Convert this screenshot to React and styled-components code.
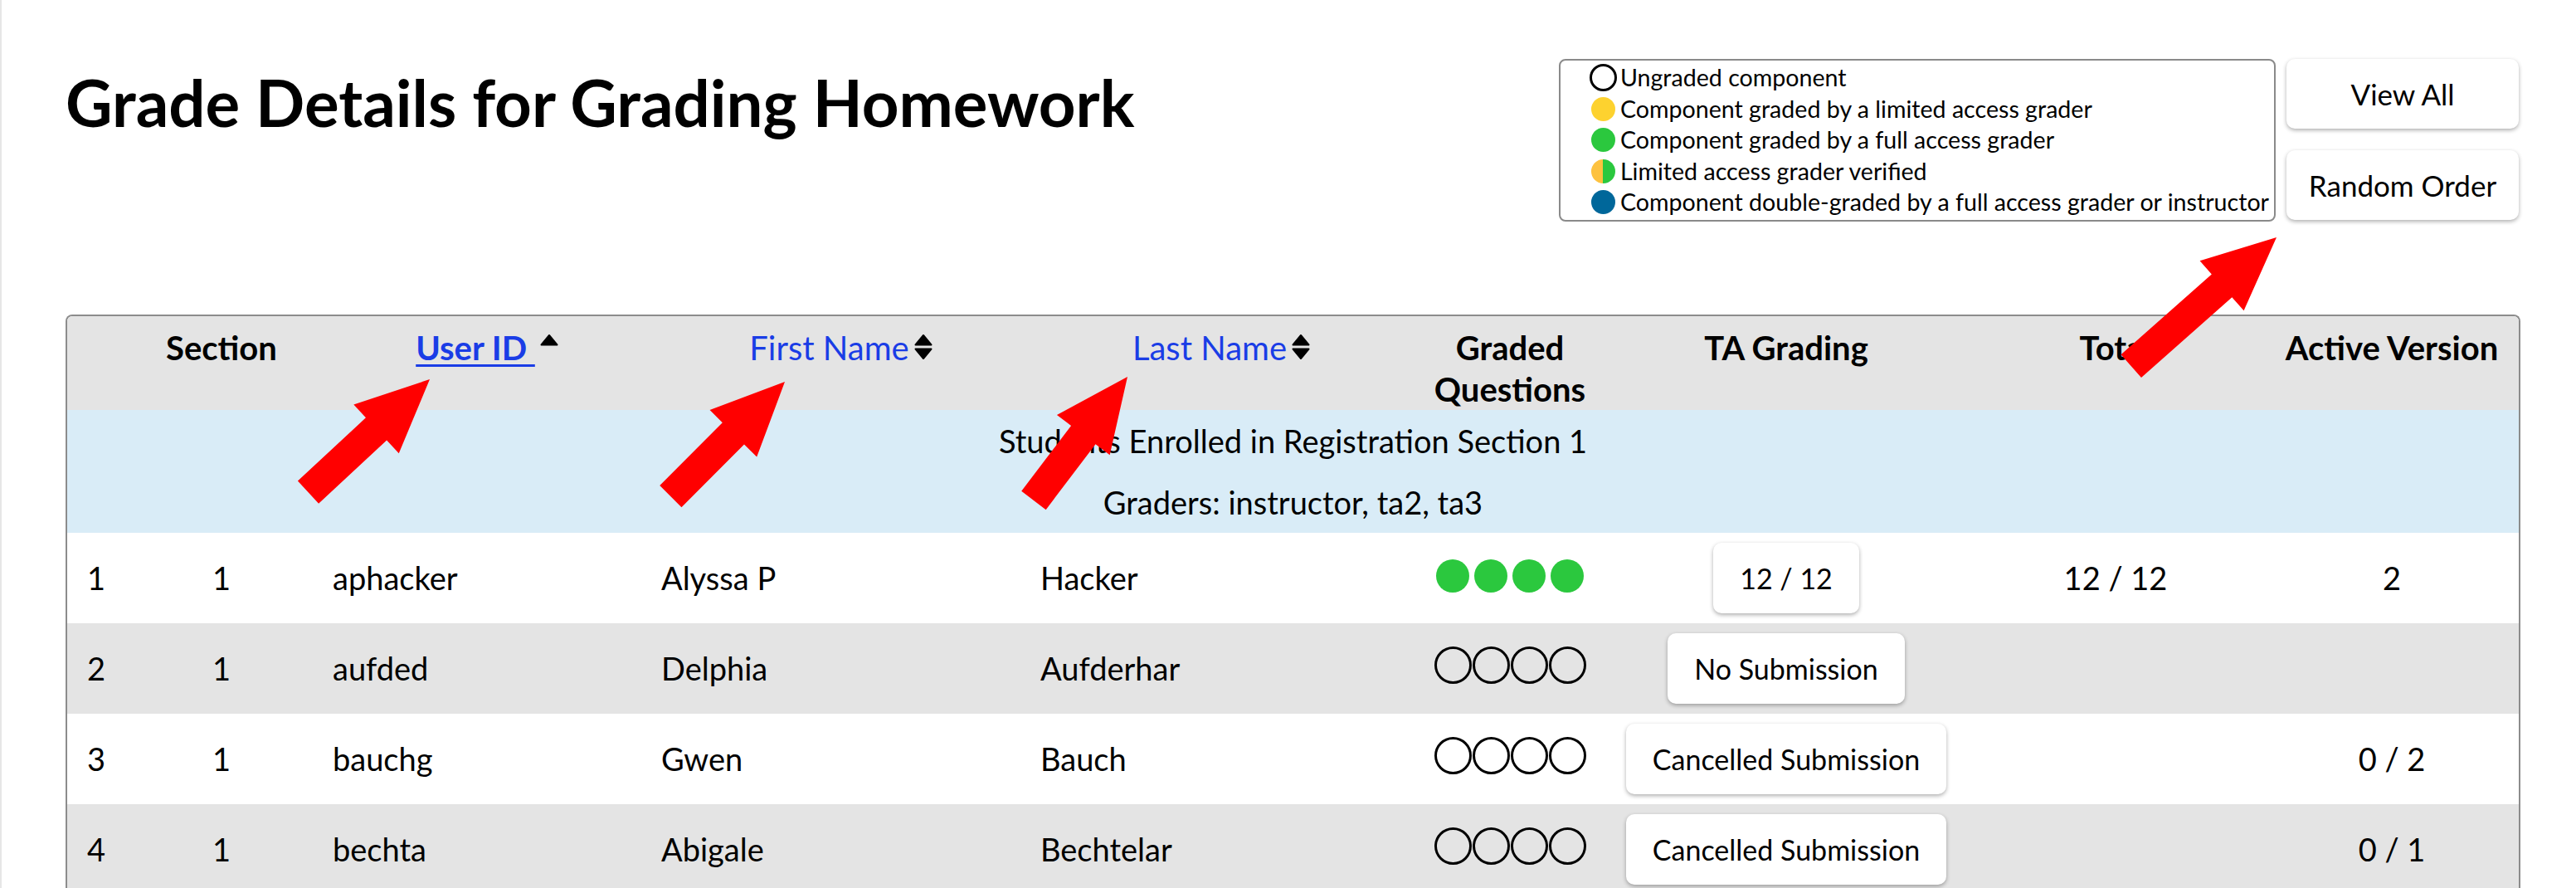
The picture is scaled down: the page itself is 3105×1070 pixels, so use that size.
import styled, { createGlobalStyle } from 'styled-components';

const GlobalStyle = createGlobalStyle`
  html, body {
    margin: 0;
    padding: 0;
    background: #fff;
  }
  body {
    font-family: 'Lato', 'Liberation Sans', sans-serif;
    color: #000;
  }
`;

const legend = [
  { kind: 'empty', label: 'Ungraded component' },
  { kind: 'limited', label: 'Component graded by a limited access grader' },
  { kind: 'full', label: 'Component graded by a full access grader' },
  { kind: 'verified', label: 'Limited access grader verified' },
  { kind: 'double', label: 'Component double-graded by a full access grader or instructor' },
];

const students = [
  { n: 1, section: 1, id: 'aphacker', first: 'Alyssa P', last: 'Hacker', graded: true, grading: '12 / 12', total: '12 / 12', version: '2' },
  { n: 2, section: 1, id: 'aufded', first: 'Delphia', last: 'Aufderhar', graded: false, grading: 'No Submission', total: '', version: '' },
  { n: 3, section: 1, id: 'bauchg', first: 'Gwen', last: 'Bauch', graded: false, grading: 'Cancelled Submission', total: '', version: '0 / 2' },
  { n: 4, section: 1, id: 'bechta', first: 'Abigale', last: 'Bechtelar', graded: false, grading: 'Cancelled Submission', total: '', version: '0 / 1' },
];

// red call-out arrows drawn over the screenshot
const arrows = [
  { x: 516, y: 457, angle: -42.9, length: 200 },
  { x: 944, y: 460, angle: -45.1, length: 195 },
  { x: 1357, y: 454, angle: -52.8, length: 187 },
  { x: 2742, y: 286, angle: -41.5, length: 234 },
];

function SortIcon({ both }) {
  return (
    <SortSvg viewBox='0 0 22 32' width='22' height='32'>
      <path d='M1.5 13.5 L11 2 L20.5 13.5 Z' fill='#000' stroke='#000' strokeWidth='2' strokeLinejoin='round' />
      {both && (
        <path d='M1.5 18.5 L11 30 L20.5 18.5 Z' fill='#000' stroke='#000' strokeWidth='2' strokeLinejoin='round' />
      )}
    </SortSvg>
  );
}

export default function App() {
  return (
    <Page>
      <GlobalStyle />
      <TopBar>
        <Title>Grade Details for Grading Homework</Title>
        <Controls>
          <Legend>
            {legend.map((item) => (
              <LegendItem key={item.kind}>
                <Dot $kind={item.kind} />
                {item.label}
              </LegendItem>
            ))}
          </Legend>
          <ButtonStack>
            <ActionButton>View All</ActionButton>
            <ActionButton>Random Order</ActionButton>
          </ButtonStack>
        </Controls>
      </TopBar>

      <Table>
        <colgroup>
          <col style={{ width: 76 }} />
          <col style={{ width: 220 }} />
          <col style={{ width: 396 }} />
          <col style={{ width: 457 }} />
          <col style={{ width: 474 }} />
          <col style={{ width: 232 }} />
          <col style={{ width: 434 }} />
          <col style={{ width: 360 }} />
          <col style={{ width: 306 }} />
        </colgroup>
        <thead>
          <tr>
            <Th />
            <Th>Section</Th>
            <Th $sortable>
              <SortLink $active>User ID </SortLink>
              <SortIcon />
            </Th>
            <Th $sortable>
              <SortLink>First Name</SortLink>
              <SortIcon both />
            </Th>
            <Th $sortable $shift='14px'>
              <SortLink>Last Name</SortLink>
              <SortIcon both />
            </Th>
            <Th>
              Graded
              <br />
              Questions
            </Th>
            <Th>TA Grading</Th>
            <Th>Total</Th>
            <Th>Active Version</Th>
          </tr>
        </thead>
        <tbody>
          <tr>
            <SectionCell colSpan={9}>Students Enrolled in Registration Section 1</SectionCell>
          </tr>
          <tr>
            <SectionCell colSpan={9}>Graders: instructor, ta2, ta3</SectionCell>
          </tr>
          {students.map((s) => (
            <Row key={s.n} $shaded={s.n % 2 === 0}>
              <Td>{s.n}</Td>
              <Td $center>{s.section}</Td>
              <Td>{s.id}</Td>
              <Td>{s.first}</Td>
              <Td>{s.last}</Td>
              <Td $center>
                <Marks>
                  {[0, 1, 2, 3].map((i) => (
                    <Mark key={i} $filled={s.graded} />
                  ))}
                </Marks>
              </Td>
              <Td $center $tight>
                <GradeButton>{s.grading}</GradeButton>
              </Td>
              <Td $center>{s.total}</Td>
              <Td $center>{s.version}</Td>
            </Row>
          ))}
        </tbody>
      </Table>

      <Annotations width='3105' height='1070' viewBox='0 0 3105 1070'>
        {arrows.map((a, i) => (
          <polygon
            key={i}
            fill='#ff0000'
            transform={`translate(${a.x} ${a.y}) rotate(${a.angle})`}
            points={`0,0 -88,-40 -88,-18.5 -${a.length},-18.5 -${a.length},18.5 -88,18.5 -88,40`}
          />
        ))}
      </Annotations>
    </Page>
  );
}

const Page = styled.div`
  position: relative;
  min-height: 1070px;
  padding: 0 69px 0 77px;
  border-left: 2px solid #e6e6e6;
  box-sizing: border-box;
  overflow: hidden;
`;

const TopBar = styled.div`
  display: flex;
  justify-content: space-between;
  align-items: flex-start;
  padding-top: 71px;
`;

const Title = styled.h1`
  margin: 6px 0 0;
  font-size: 78px;
  font-weight: 700;
  line-height: 1.2;
  white-space: nowrap;
`;

const Controls = styled.div`
  display: flex;
  align-items: flex-start;
  gap: 13px;
`;

const Legend = styled.div`
  border: 2px solid #8a8a8a;
  border-radius: 8px;
  padding: 2px 6px 2px 35px;
  font-size: 28.6px;
  line-height: 37.5px;
  white-space: nowrap;
`;

const LegendItem = styled.div`
  display: flex;
  align-items: center;
`;

const dotFill = {
  limited: '#fdd22f',
  full: '#2bc83e',
  double: '#00679a',
  verified: 'linear-gradient(90deg, #fdc23f 50%, #2bc83e 50%)',
};

const Dot = styled.span`
  flex: none;
  box-sizing: border-box;
  border-radius: 50%;
  width: ${(p) => (p.$kind === 'empty' ? '33px' : '29px')};
  height: ${(p) => (p.$kind === 'empty' ? '33px' : '29px')};
  margin: ${(p) => (p.$kind === 'empty' ? '0 4px 0 0' : '0 6px 0 2px')};
  border: ${(p) => (p.$kind === 'empty' ? '3px solid #000' : 'none')};
  background: ${(p) => dotFill[p.$kind] || 'transparent'};
`;

const ButtonStack = styled.div`
  display: flex;
  flex-direction: column;
  gap: 26px;
`;

const ActionButton = styled.button`
  width: 280px;
  height: 84px;
  background: #fff;
  border: none;
  border-radius: 10px;
  box-shadow: 0 2px 5px rgba(0, 0, 0, 0.32);
  font-family: 'Lato', 'Liberation Sans', sans-serif;
  font-size: 35px;
  color: #000;
  cursor: pointer;
`;

const Table = styled.table`
  margin-top: 112px;
  width: 100%;
  table-layout: fixed;
  border-collapse: separate;
  border-spacing: 0;
  border: 2px solid #8c8c8c;
  border-bottom: none;
  border-radius: 8px 8px 0 0;
  overflow: hidden;
`;

const Th = styled.th`
  background: #e4e4e4;
  padding: ${(p) => (p.$sortable ? `13px ${p.$shift || '0'} 0 24px` : '13px 10px 0')};
  font-size: 40px;
  font-weight: 700;
  line-height: 50px;
  text-align: center;
  vertical-align: top;
  white-space: nowrap;
`;

const SortLink = styled.a`
  color: #1a3de6;
  font-weight: ${(p) => (p.$active ? 700 : 400)};
  text-decoration: ${(p) => (p.$active ? 'underline' : 'none')};
  text-decoration-thickness: 3px;
  text-underline-offset: 5px;
  white-space: pre;
  cursor: pointer;
`;

const SortSvg = styled.svg`
  margin-left: 6px;
  vertical-align: baseline;
`;

const SectionCell = styled.td`
  background: #d9ecf7;
  padding: 12px;
  font-size: 38px;
  line-height: 50px;
  text-align: center;
`;

const Row = styled.tr`
  background: ${(p) => (p.$shaded ? '#e4e4e4' : '#fff')};
`;

const Td = styled.td`
  height: 85px;
  padding: 12px ${(p) => (p.$tight ? '8px' : '24px')};
  font-size: 38px;
  line-height: 50px;
  text-align: ${(p) => (p.$center ? 'center' : 'left')};
  vertical-align: middle;
  white-space: nowrap;
`;

const Marks = styled.span`
  display: inline-flex;
  align-items: center;
  vertical-align: middle;
  position: relative;
  top: -7px;
`;

const Mark = styled.span`
  box-sizing: border-box;
  border-radius: 50%;
  width: ${(p) => (p.$filled ? '40px' : '45px')};
  height: ${(p) => (p.$filled ? '40px' : '45px')};
  margin: ${(p) => (p.$filled ? '0 3px' : '0 0.5px')};
  background: ${(p) => (p.$filled ? '#2bc83e' : 'transparent')};
  border: ${(p) => (p.$filled ? 'none' : '3.5px solid #000')};
`;

const GradeButton = styled.button`
  height: 85px;
  padding: 0 32px;
  background: #fff;
  border: none;
  border-radius: 10px;
  box-shadow: 0 2px 5px rgba(0, 0, 0, 0.32);
  font-family: 'Lato', 'Liberation Sans', sans-serif;
  font-size: 34px;
  color: #000;
  white-space: nowrap;
  cursor: pointer;
`;

const Annotations = styled.svg`
  position: absolute;
  top: 0;
  left: 0;
  pointer-events: none;
`;
